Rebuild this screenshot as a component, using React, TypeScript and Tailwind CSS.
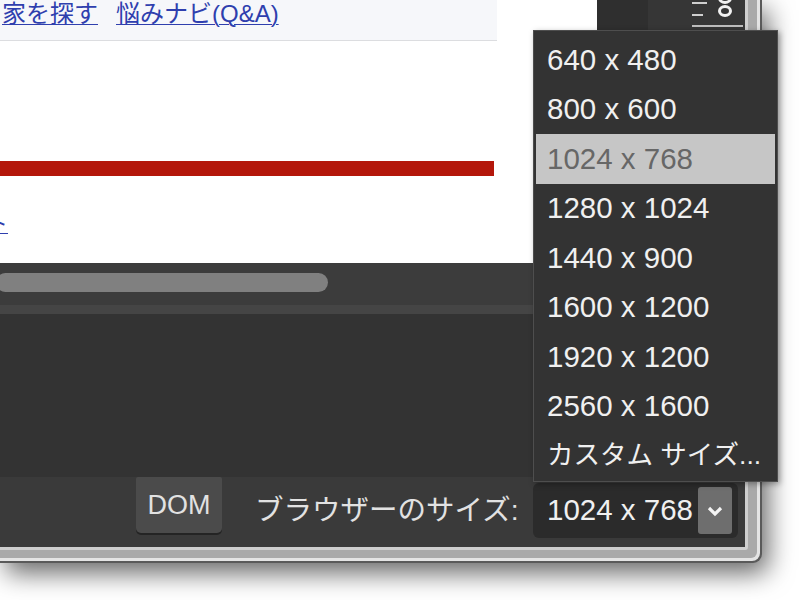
import React from 'react';

const sizes = ['640 x 480', '800 x 600', '1024 x 768', '1280 x 1024', '1440 x 900', '1600 x 1200', '1920 x 1200', '2560 x 1600'];

export default function App() {
    return (
        <div className="relative w-[800px] h-[600px] overflow-hidden bg-white font-[family-name:Liberation_Sans,Noto_Sans_CJK_JP,sans-serif]">
            {/* Window frame: stacked stripes on right and bottom */}
            <div className="w-[762px] h-[563px] bg-[#5a5a5a] pr-[2px] pb-[2px] rounded-br-[9px] shadow-[6px_10px_26px_rgba(0,0,0,0.6)]">
                <div className="h-full bg-[#e4e4e4] pr-[3px] pb-[3px] rounded-br-[8px]">
                    <div className="h-full bg-[#a9a9a9] pr-[9px] pb-[8px] rounded-br-[6px]">
                        <div className="h-full bg-[#cecece] pr-[3px] pb-[3px] rounded-br-[3px]">
                            <div className="w-[745px] h-[547px] flex flex-col bg-[#333333]">
                                {/* Top: web view + side panel */}
                                <div className="h-[263px] flex">
                                    <div className="w-[597px] bg-white flex flex-col">
                                        <div className="w-[497px] h-[41px] bg-[#f6f7fa] border-b border-[#dcdde0] flex gap-[18px] pl-[2px] pt-[1px] text-[24px] leading-[26px] text-[#2f3fae]">
                                            <span className="underline underline-offset-[2px] decoration-1 whitespace-nowrap">家を探す</span>
                                            <span className="underline underline-offset-[2px] decoration-1 whitespace-nowrap">悩みナビ(Q&amp;A)</span>
                                        </div>
                                        <div className="mt-[120px] w-[494px] h-[15px] bg-[#b4170b]" />
                                        <div className="mt-[38px] h-[20px] overflow-hidden">
                                            <span className="-ml-[14px] text-[22px] leading-[20px] text-[#2f3fae] underline underline-offset-[2px] decoration-1">ト</span>
                                        </div>
                                    </div>
                                    <div className="flex-1 flex">
                                        <div className="w-[51px] bg-[#2f2f2f]" />
                                        <div className="flex-1 bg-[#363636]">
                                            <svg width="97" height="30" viewBox="0 0 97 30">
                                                <line x1="44" y1="3" x2="59" y2="3" stroke="#cfcfcf" strokeWidth="2" />
                                                <line x1="44" y1="15" x2="55" y2="15" stroke="#cfcfcf" strokeWidth="2" />
                                                <ellipse cx="77" cy="-2" rx="5.5" ry="4.5" fill="none" stroke="#f2f2f2" strokeWidth="3" />
                                                <ellipse cx="77" cy="11" rx="5.5" ry="4.5" fill="none" stroke="#f2f2f2" strokeWidth="3" />
                                                <line x1="44" y1="26" x2="95" y2="26" stroke="#bdbdbd" strokeWidth="2" />
                                            </svg>
                                        </div>
                                    </div>
                                </div>

                                {/* Horizontal scrollbar */}
                                <div className="h-[42px] bg-[#3c3c3c] pt-[10px]">
                                    <div className="w-[332px] h-[19px] rounded-full bg-[#808080] -ml-[4px]" />
                                </div>
                                <div className="h-[9px] bg-[#454545]" />

                                {/* Dark panel */}
                                <div className="flex-1 bg-[#333333]" />

                                {/* Bottom toolbar */}
                                <div className="h-[70px] bg-[#3a3a3a] flex items-start pl-[136px]">
                                    <button className="w-[86px] h-[56px] bg-[#4b4b4b] rounded-t-[2px] rounded-b-[5px] shadow-[0_2px_0_#242424] text-[27px] text-[#e2e2e2] flex items-center justify-center">
                                        DOM
                                    </button>
                                    <span className="w-[311px] shrink-0 pl-[33px] mt-[15px] text-[28.5px] leading-[36px] text-[#e2e2e2] whitespace-nowrap">ブラウザーのサイズ:</span>
                                    <div className="mt-[6px] w-[205px] h-[55px] shrink-0 rounded-[6px] bg-[#2b2b2b] flex items-center pl-[14px] pr-[6px]">
                                        <span className="flex-1 text-[29.5px] text-[#f0f0f0] whitespace-nowrap">1024 x 768</span>
                                        <div className="w-[34px] h-[47px] rounded-[3px] bg-[#6e6e6e] flex items-center justify-center">
                                            <svg width="18" height="14" viewBox="0 0 18 14">
                                                <polyline points="3,4 9,10 15,4" fill="none" stroke="#f4f4f4" strokeWidth="3.2" />
                                            </svg>
                                        </div>
                                    </div>
                                </div>
                            </div>
                        </div>
                    </div>
                </div>
            </div>

            {/* Size dropdown menu */}
            <div className="absolute left-[533px] top-[30px] w-[245px] h-[452px] bg-[#333333] border border-[#4e4e4e] px-[2px] pt-[4px] shadow-[2px_2px_6px_rgba(0,0,0,0.35)]">
                {sizes.map(s => (
                    <div
                        key={s}
                        className={`h-[49.5px] flex items-center pl-[11px] text-[29.5px] whitespace-nowrap ${s === '1024 x 768' ? 'bg-[#c6c6c6] text-[#676767]' : 'text-[#f0f0f0]'}`}
                    >
                        {s}
                    </div>
                ))}
                <div className="h-[49.5px] flex items-center pl-[11px] text-[26.5px] text-[#f0f0f0] whitespace-nowrap">
                    カスタム サイズ...
                </div>
            </div>
        </div>
    );
}
